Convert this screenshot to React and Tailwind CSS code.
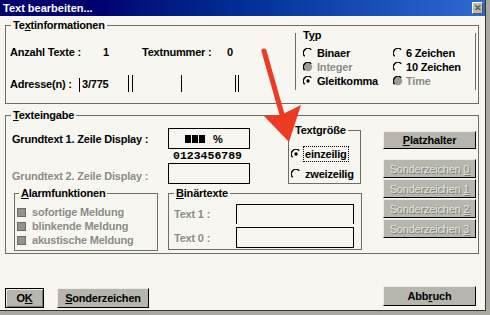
import React from "react";

const Radio = ({ checked, disabled }) => (
  <svg width="10" height="10" viewBox="0 0 10 10" className="shrink-0">
    {disabled && <circle cx="5" cy="5" r="4.3" fill="#9c9c94" />}
    <path d="M1.7 8.2 A4.4 4.4 0 0 1 8.2 1.7" fill="none" stroke="#000" strokeWidth="1.4" />
    {checked && <circle cx="5" cy="5" r="1.7" fill={disabled ? "#5a5a52" : "#000"} />}
  </svg>
);

const Check = () => <span className="w-[9px] h-[9px] shrink-0 bg-[#94948c] border border-[#6a6a62]" />;

const Group = ({ label, className, legendClass, children }) => (
  <fieldset className={`border border-[#6e6e64] ${className}`}>
    <legend className={`px-[2px] leading-[12px] ${legendClass}`}>{label}</legend>
    {children}
  </fieldset>
);

const Btn = ({ children, className = "", disabled }) => (
  <div
    className={`flex items-center justify-center bg-[#b6b6ae] border border-t-[#ecece4] border-l-[#ecece4] border-r-black border-b-black ${
      disabled ? "text-[#e6e6de] [text-shadow:1px_1px_0_#76766e] font-normal" : "text-black"
    } ${className}`}
  >
    {children}
  </div>
);

const dim = "text-[#8a8a82] [text-shadow:1px_1px_0_#ffffff]";

export default function App() {
  return (
    <div className="relative w-[490px] h-[315px] overflow-hidden bg-[#a9a9a1] text-black text-[11px] font-bold leading-[12px] tracking-[-0.2px] font-['Liberation_Sans',Arial,sans-serif]">
      <div className="w-[486px] h-[311px] flex flex-col bg-[#f7f6f1] border-r border-b border-[#34342f]">
        {/* title bar */}
        <div className="h-[16px] shrink-0 flex items-center bg-linear-to-r from-[#000070] from-20% to-[#2e6ad2] pl-[3px]">
          <span className="text-white tracking-[0px]">Text bearbeiten...</span>
          <span className="ml-auto mr-[2px] w-[11px] h-[12px] flex items-center justify-center bg-[#bdbdb5] border border-t-white border-l-white border-r-[#555] border-b-[#555] text-[9px] leading-none text-[#555]">
            ✕
          </span>
        </div>

        {/* Textinformationen */}
        <Group
          label={<>Te<u>x</u>tinformationen</>}
          legendClass="ml-[5px]"
          className="ml-[5px] mt-[3px] w-[474px] h-[85px] shrink-0"
        >
          <div className="flex">
            <div className="w-[289px] pl-[4px]">
              <div className="mt-[15px] h-[12px] flex items-center">
                <span className="w-[93px]">Anzahl Texte :</span>
                <span className="w-[39px]">1</span>
                <span className="w-[85px]">Textnummer :</span>
                <span>0</span>
              </div>
              <div className="mt-[17px] h-[17px] flex items-center">
                <span className="w-[69px]">Adresse(n) :</span>
                <span className="w-px h-[14px] mt-[3px] bg-black" />
                <span className="w-[48px] pl-[2px]">3/775</span>
                <span className="w-px h-[17px] bg-black" />
                <span className="w-[3px]" />
                <span className="w-px h-[17px] bg-black" />
                <span className="w-[48px]" />
                <span className="w-px h-[17px] bg-black" />
                <span className="w-[53px]" />
                <span className="w-px h-[17px] bg-black" />
                <span className="w-[2px]" />
                <span className="w-px h-[17px] bg-black" />
              </div>
            </div>
            <div className="w-[181px] h-[57px] mt-[2px] border-x border-[#6e6e64]">
              <div className="-mt-[4px] pl-[7px] h-[12px]">
                T<u>y</u>p
              </div>
              <div className="mt-[5px] pl-[7px] grid grid-cols-[90px_1fr]">
                <div className="h-[14px] flex items-center gap-[4px]"><Radio />Binaer</div>
                <div className="h-[14px] flex items-center gap-[3px]"><Radio />6 Zeichen</div>
                <div className={`h-[14px] flex items-center gap-[4px] ${dim}`}><Radio disabled />Integer</div>
                <div className="h-[14px] flex items-center gap-[3px]"><Radio />10 Zeichen</div>
                <div className="h-[14px] flex items-center gap-[4px]"><Radio checked />Gleitkomma</div>
                <div className={`h-[14px] flex items-center gap-[3px] ${dim}`}><Radio disabled />Time</div>
              </div>
            </div>
          </div>
        </Group>

        {/* Texteingabe */}
        <Group
          label={<><u>T</u>exteingabe</>}
          legendClass="ml-[5px]"
          className="ml-[5px] mt-[5px] w-[474px] h-[145px] shrink-0"
        >
          <div className="flex">
            <div className="w-[356px]">
              <div className="flex">
                <div className="w-[282px]">
                  <div className="mt-[7px] flex items-center">
                    <span className="w-[162px] pl-[6px]">Grundtext 1. Zeile Display :</span>
                    <div className="w-[82px] h-[21px] border border-black flex items-center pl-[16px] gap-[1px]">
                      <span className="w-[6px] h-[8px] bg-black" />
                      <span className="w-[6px] h-[8px] bg-black" />
                      <span className="w-[6px] h-[8px] bg-black" />
                      <span className="ml-[7px]">%</span>
                    </div>
                  </div>
                  <div className="mt-[1px] h-[12px] pl-[167px] font-['Liberation_Mono',monospace] text-[11.5px] tracking-[0px]">
                    0123456789
                  </div>
                  <div className="mt-[1px] flex items-center">
                    <span className={`w-[162px] pl-[6px] pt-[4px] ${dim}`}>Grundtext 2. Zeile Display :</span>
                    <div className="w-[82px] h-[21px] border border-black" />
                  </div>
                </div>
                <Group
                  label={<>Text<u>g</u>röße</>}
                  legendClass="ml-[4px]"
                  className="w-[73px] h-[60px] mt-[3px]"
                >
                  <div className="mt-[10px] pl-[2px] h-[16px] flex items-center gap-[2px]">
                    <Radio checked />
                    <span className="h-[16px] flex items-center px-[1px] border border-dotted border-black">einzeilig</span>
                  </div>
                  <div className="mt-[5px] pl-[2px] h-[14px] flex items-center gap-[4px]">
                    <Radio />
                    zweizeilig
                  </div>
                </Group>
              </div>

              <div className="mt-[3px] flex">
                <Group
                  label={<><u>A</u>larmfunktionen</>}
                  legendClass="ml-[4px]"
                  className="ml-[8px] w-[144px] h-[64px]"
                >
                  <div className={`mt-[6px] pl-[2px] ${dim}`}>
                    <div className="h-[14px] flex items-center gap-[6px]"><Check />sofortige Meldung</div>
                    <div className="h-[14px] flex items-center gap-[6px]"><Check />blinkende Meldung</div>
                    <div className="h-[14px] flex items-center gap-[6px]"><Check />akustische Meldung</div>
                  </div>
                </Group>
                <Group
                  label={<><u>B</u>inärtexte</>}
                  legendClass="ml-[5px]"
                  className="ml-[10px] w-[194px] h-[63px]"
                >
                  <div className="mt-[5px] pl-[5px] flex items-center">
                    <span className={`w-[62px] ${dim}`}>Text 1 :</span>
                    <div className="w-[118px] h-[20px] border-t border-x border-black" />
                  </div>
                  <div className="mt-[3px] pl-[5px] flex items-center">
                    <span className={`w-[62px] ${dim}`}>Text 0 :</span>
                    <div className="w-[118px] h-[21px] border border-black" />
                  </div>
                </Group>
              </div>
            </div>

            <div className="ml-[21px] w-[93px] flex flex-col">
              <Btn className="mt-[10px] h-[18px]"><span><u>P</u>latzhalter</span></Btn>
              <div className="mt-[10px] flex flex-col gap-[1px]">
                <Btn disabled className="h-[19px]"><span>Sonderzeichen <u>0</u></span></Btn>
                <Btn disabled className="h-[19px]"><span>Sonderzeichen <u>1</u></span></Btn>
                <Btn disabled className="h-[19px]"><span>Sonderzeichen <u>2</u></span></Btn>
                <Btn disabled className="h-[19px]"><span>Sonderzeichen <u>3</u></span></Btn>
              </div>
            </div>
          </div>
        </Group>

        {/* bottom buttons */}
        <div className="mt-[32px] pl-[5px] flex items-start">
          <Btn className="mt-[2px] w-[39px] h-[20px] !border-black shadow-[inset_1px_1px_0_#ecece4,inset_-1px_-1px_0_#77776f]">
            <span>O<u>K</u></span>
          </Btn>
          <Btn className="mt-[2px] ml-[13px] w-[92px] h-[20px]">
            <span><u>S</u>onderzeichen</span>
          </Btn>
          <Btn className="ml-[234px] w-[93px] h-[20px]">
            <span>Abb<u>r</u>uch</span>
          </Btn>
        </div>
      </div>

      {/* red annotation arrow */}
      <svg className="absolute left-0 top-0 pointer-events-none" width="490" height="315" viewBox="0 0 490 315">
        <line x1="264" y1="51" x2="283" y2="118" stroke="#ee3a22" strokeWidth="5" strokeLinecap="round" />
        <polygon points="289,142 264,116 281,115 301,105" fill="#ee3a22" />
      </svg>
    </div>
  );
}
